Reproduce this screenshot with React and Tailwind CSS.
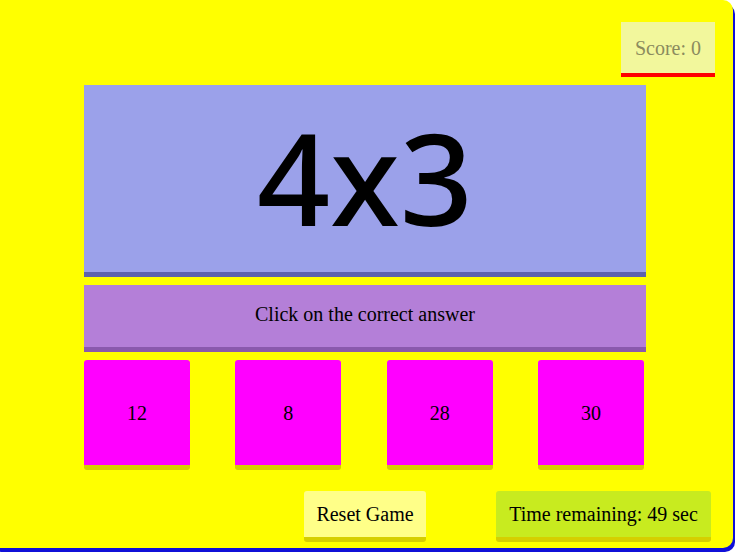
const ANSWERS = [12, 8, 28, 30]

export default function App() {
  return (
    <div className="h-[552px] w-[735px] overflow-hidden bg-white font-['Liberation_Serif',serif] text-[20px] text-black">
      <div className="-ml-[10px] flex h-[548px] w-[743px] flex-col rounded-[10px] bg-[#ffff00] shadow-[2px_4px_0_#1010d8]">
        {/* score */}
        <div className="flex justify-end pt-[22px] pr-[18px]">
          <div className="flex h-[55px] w-[94px] items-center justify-center border-b-4 border-[#ff0000] bg-[#f2f79c] text-[#8b8b5e]">
            Score: 0
          </div>
        </div>

        {/* board */}
        <div className="mt-[8px] ml-[94px] w-[562px]">
          <div className="flex h-[192px] items-center justify-center border-b-[5px] border-[#5d62ae] bg-[#9ba1ea] pb-[4px]">
            <span className="font-['Noto_Sans',sans-serif] text-[128px] leading-none font-medium">4x3</span>
          </div>
          <div className="mt-[8px] flex h-[67px] items-center justify-center border-b-[5px] border-[#8a59ad] bg-[#b47fd8] pb-[4px]">
            Click on the correct answer
          </div>
          <div className="mt-[8px] flex w-[560px] justify-between">
            {ANSWERS.map((n) => (
              <button
                key={n}
                className="flex h-[110px] w-[106px] items-center justify-center rounded-[3px] border-b-[5px] border-[#d6cf00] bg-[#ff00ff]"
              >
                {n}
              </button>
            ))}
          </div>
        </div>

        {/* controls */}
        <div className="mt-[21px] flex justify-end gap-[70px] pr-[22px]">
          <button className="flex h-[51px] w-[122px] items-center justify-center rounded-[3px] border-b-[5px] border-[#d6cf00] bg-[#ffff88]">
            Reset Game
          </button>
          <div className="flex h-[51px] w-[215px] items-center justify-center rounded-[3px] border-b-[5px] border-[#d6cf00] bg-[#c8eb1f]">
            Time remaining: 49 sec
          </div>
        </div>
      </div>
    </div>
  )
}
